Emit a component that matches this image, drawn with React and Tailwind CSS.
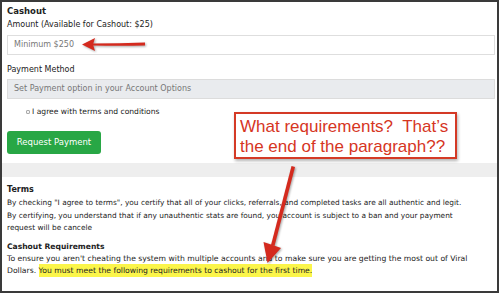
export default function App() {
  return (
    <div className="relative w-[500px] h-[296px] bg-white overflow-hidden font-['DejaVu_Sans',sans-serif] text-[#222]">
      <div className="w-[499px] h-[293px] border-2 border-[#3a3a3a] bg-[#eeeeee] flex flex-col">
        {/* Cashout card */}
        <div className="bg-white h-[161px] pl-[5px] pr-[2px] pt-[3px]">
          <div className="text-[8.5px] font-bold leading-[12px]">Cashout</div>
          <div className="mt-[2px] text-[8px] leading-[12px]">Amount (Available for Cashout: $25)</div>
          <div className="mt-[4px] h-[20px] border border-[#dedede] bg-white flex items-center px-[6px] text-[8px] text-[#777]">
            Minimum $250
          </div>
          <div className="mt-[9px] text-[8px] leading-[12px]">Payment Method</div>
          <div className="mt-[3px] h-[20px] border border-[#dcdcdc] bg-[#e9ebee] flex items-center px-[6px] text-[8px] text-[#777]">
            Set Payment option in your Account Options
          </div>
          <div className="mt-[7px] ml-[19px] flex items-center gap-[2px] text-[7.6px] leading-[12px]">
            <span className="w-[4px] h-[4px] border border-[#aaa] bg-[#f4f4f4] rounded-[1px]" />
            <span>I agree with terms and conditions</span>
          </div>
          <div className="mt-[13px] w-[94px] h-[23px] rounded-[3px] bg-[#28a745] text-white text-[8.5px] flex items-center justify-center">
            Request Payment
          </div>
        </div>

        {/* Terms card */}
        <div className="mt-[14px] bg-white flex-1 pl-[5px] pt-[7px]">
          <div className="text-[8px] font-bold leading-[12px]">Terms</div>
          <div className="mt-[1px] text-[7.4px] leading-[12.5px] whitespace-nowrap">
            <div>By checking "I agree to terms", you certify that all of your clicks, referrals, and completed tasks are all authentic and legit.</div>
            <div>By certifying, you understand that if any unauthentic stats are found, you account is subject to a ban and your payment</div>
            <div>request will be cancele</div>
          </div>
          <div className="mt-[6.5px] text-[7.6px] font-bold leading-[12px]">Cashout Requirements</div>
          <div className="text-[7.68px] leading-[12px] whitespace-nowrap">
            <div>To ensure you aren't cheating the system with multiple accounts and to make sure you are getting the most out of Viral</div>
            <div>
              Dollars.{' '}
              <span className="bg-[#fbf54a] py-[2px]">You must meet the following requirements to cashout for the first time.</span>
            </div>
          </div>
        </div>
      </div>

      {/* annotation: arrows */}
      <svg className="absolute left-0 top-0 drop-shadow-[1px_1px_1px_rgba(0,0,0,0.35)]" width="500" height="296" viewBox="0 0 500 296">
        <path d="M145 42.5 Q120 43.5 92 43.5 L92 45.5 Q120 46 145 45.5 Z" fill="#d42a1e" />
        <polygon points="82,44.5 95,38 93,44.5 95,51" fill="#d42a1e" />
        <path d="M291.5 166 L295 167 L274.5 246 L271 245 Z" fill="#d42a1e" />
        <polygon points="267.5,263 263.5,242 272.5,245 281,248" fill="#d42a1e" />
      </svg>

      {/* annotation callout */}
      <div className="absolute left-[234px] top-[112px] w-[223px] h-[47px] border-2 border-[#d43a26] bg-white shadow-[1px_2px_3px_rgba(0,0,0,0.3)] font-['Liberation_Sans',Arial,sans-serif] text-[17px] leading-[20px] text-[#d6361f] pl-[4px] pt-[3px] whitespace-pre">
        <div>What requirements?  That’s</div>
        <div>the end of the paragraph??</div>
      </div>
    </div>
  )
}
